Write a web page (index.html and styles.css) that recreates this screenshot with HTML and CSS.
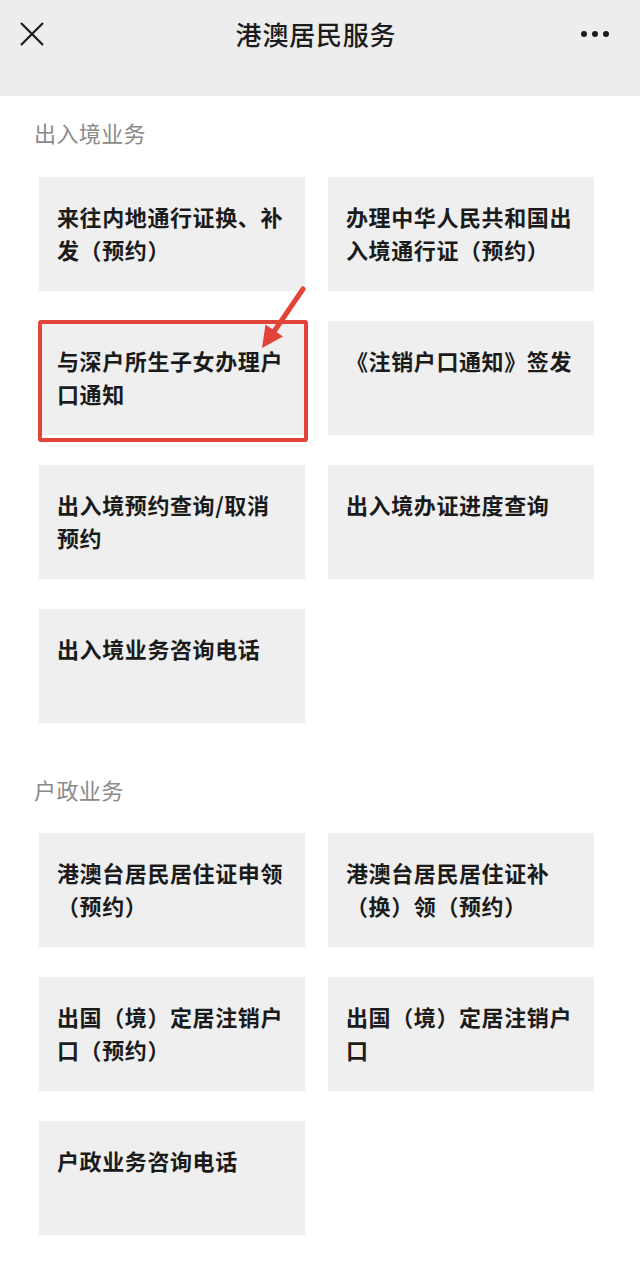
FILE: index.html
```html
<!DOCTYPE html>
<html lang="zh-CN">
<head>
<meta charset="utf-8">
<title>港澳居民服务</title>
<link rel="stylesheet" href="styles.css">
</head>
<body>
<header class="topbar">
  <svg class="close" viewBox="0 0 26 26" width="26" height="26"><path d="M2 2L24 24M24 2L2 24" stroke="#1c1c1c" stroke-width="2.2" fill="none"/></svg>
  <h1 class="title">港澳居民服务</h1>
  <svg class="more" viewBox="0 0 30 8" width="30" height="8"><circle cx="4" cy="4" r="3" fill="#1c1c1c"/><circle cx="15" cy="4" r="3" fill="#1c1c1c"/><circle cx="26" cy="4" r="3" fill="#1c1c1c"/></svg>
</header>
<main>
  <section class="group first">
    <h2 class="group-title">出入境业务</h2>
    <div class="grid">
      <div class="card">来往内地通行证换、补发（预约）</div>
      <div class="card">办理中华人民共和国出入境通行证（预约）</div>
      <div class="card marked">与深户所生子女办理户口通知
        <span class="redbox"></span>
        <svg class="arrow" viewBox="0 0 80 80" width="80" height="80">
          <path d="M64 8L34 52" stroke="#e2443a" stroke-width="5" stroke-linecap="round" fill="none"/>
          <path d="M23 67L44 55.5L26.5 43.5Z" fill="#e2443a"/>
        </svg>
      </div>
      <div class="card">《注销户口通知》签发</div>
      <div class="card">出入境预约查询/取消预约</div>
      <div class="card">出入境办证进度查询</div>
      <div class="card">出入境业务咨询电话</div>
    </div>
  </section>
  <section class="group second">
    <h2 class="group-title">户政业务</h2>
    <div class="grid">
      <div class="card">港澳台居民居住证申领（预约）</div>
      <div class="card">港澳台居民居住证补（换）领（预约）</div>
      <div class="card">出国（境）定居注销户口（预约）</div>
      <div class="card">出国（境）定居注销户口</div>
      <div class="card">户政业务咨询电话</div>
    </div>
  </section>
</main>
</body>
</html>
```
FILE: styles.css
```css
* { box-sizing: border-box; }
html, body { margin: 0; padding: 0; background: #ffffff; }
body {
  font-family: "Noto Sans CJK SC", "Noto Sans", sans-serif;
  color: #1b1b1b;
  width: 640px;
  height: 1262px;
  overflow: hidden;
}
.topbar {
  height: 96px;
  background: #ededed;
  display: flex;
  align-items: flex-start;
  justify-content: space-between;
  padding: 0 30px 0 19px;
}
.close { margin-top: 21px; }
.title {
  margin: 0;
  margin-top: 15px;
  margin-left: 7px;
  font-size: 26px;
  line-height: 38px;
  font-weight: 500;
  color: #1c1c1c;
  letter-spacing: 0.8px;
}
.more { margin-top: 30px; }
.group { padding-left: 34px; }
.group.first { padding-top: 21px; }
.group.second { padding-top: 51px; }
.group-title {
  margin: 0;
  font-size: 22px;
  line-height: 30px;
  font-weight: 400;
  color: #8a8a8a;
  letter-spacing: 0.4px;
}
.grid {
  margin-top: 30px;
  margin-left: 5px;
  display: grid;
  grid-template-columns: 266px 266px;
  column-gap: 23px;
  row-gap: 30px;
}
.group.second .grid { margin-top: 29px; }
.card {
  position: relative;
  height: 114px;
  background: #efefef;
  padding: 23px 18px 0 18px;
  font-size: 22px;
  line-height: 33px;
  font-weight: 700;
  letter-spacing: 0.6px;
  color: #1b1b1b;
}
.redbox {
  position: absolute;
  left: -1px;
  top: -1px;
  width: 270px;
  height: 122px;
  border: 4px solid #e2443a;
  border-radius: 3px;
}
.arrow {
  position: absolute;
  left: 200px;
  top: -40px;
}
```
